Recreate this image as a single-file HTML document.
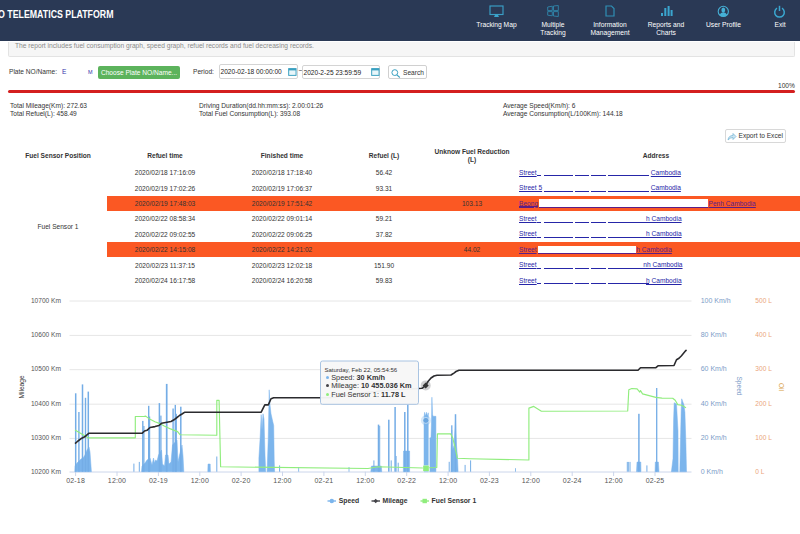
<!DOCTYPE html>
<html><head><meta charset="utf-8">
<style>
*{margin:0;padding:0;box-sizing:border-box}
html,body{width:800px;height:534px;overflow:hidden;background:#fff;font-family:"Liberation Sans",sans-serif;color:#333}
.a{position:absolute;white-space:nowrap}
#hdr{position:absolute;left:0;top:0;width:800px;height:41px;background:#2a3955}
.ttl{color:#fff;font-weight:bold;font-size:10px;top:8.5px;left:-2.5px;transform:scaleX(0.88);transform-origin:0 0}
.nav{color:#fff;font-size:6.7px;text-align:center;line-height:7.5px}
.sm{font-size:6.6px;color:#333;line-height:8px}
.th{font-size:6.6px;font-weight:bold;color:#333;text-align:center;line-height:8px}
.td{font-size:6.6px;color:#333;text-align:center;line-height:8px}
.lk{font-size:6.6px;color:#1a1aa6;text-decoration:underline;line-height:8px}
.ax{font-size:6.6px;color:#555;line-height:8px}
.sp{color:#7c9cc8}
.oil{color:#eba57a}
.lg{font-size:6.8px;font-weight:bold;color:#333;line-height:8px}
.tt{font-size:7.35px;color:#333;line-height:8px}
.band{position:absolute;left:107px;width:693px;height:15px;background:#fb5823}
</style></head><body>
<div id="hdr">
  <div class="a ttl">O TELEMATICS PLATFORM</div>
  <svg class="a" style="left:489px;top:5px" width="15" height="13" viewBox="0 0 15 13"><rect x="1" y="1" width="13" height="8.5" fill="none" stroke="#3a9fc6" stroke-width="1.15"/><path d="M6 10 L9 10 L10 12 L5 12 Z" fill="#3aa6cf"/></svg>
  <div class="a nav" style="left:466px;top:21px;width:61px">Tracking Map</div>
  <svg class="a" style="left:547px;top:5px" width="12" height="12" viewBox="0 0 12 12"><path d="M0.7 2 L5.3 1.2 L5.3 5.6 L0.7 5.6 Z M6.5 1 L11.3 0.5 L11.3 5.6 L6.5 5.6 Z M0.7 6.6 L5.3 6.6 L5.3 10.8 L0.7 10.2 Z M6.5 6.6 L11.3 6.6 L11.3 11.5 L6.5 11 Z" fill="none" stroke="#2f7fa3" stroke-width="1"/></svg>
  <div class="a nav" style="left:523px;top:21px;width:60px">Multiple<br>Tracking</div>
  <svg class="a" style="left:605px;top:5px" width="10" height="12" viewBox="0 0 10 12"><path d="M1 1 L6.5 1 L9 3.5 L9 11 L1 11 Z" fill="none" stroke="#2f8fb5" stroke-width="1.2"/></svg>
  <div class="a nav" style="left:580px;top:21px;width:60px">Information<br>Management</div>
  <svg class="a" style="left:660px;top:5px" width="13" height="12" viewBox="0 0 13 12"><rect x="1" y="8" width="2" height="3" fill="#3aa6cf"/><rect x="4.3" y="3" width="2" height="8" fill="#3aa6cf"/><rect x="7.6" y="1" width="2" height="10" fill="#3aa6cf"/><rect x="10.6" y="5" width="2" height="6" fill="#3aa6cf"/></svg>
  <div class="a nav" style="left:636px;top:21px;width:60px">Reports and<br>Charts</div>
  <svg class="a" style="left:717px;top:4.5px" width="13" height="13" viewBox="0 0 13 13"><circle cx="6.3" cy="6.4" r="5.1" fill="none" stroke="#45b0d6" stroke-width="1.1"/><ellipse cx="6.3" cy="4.9" rx="1.9" ry="2.5" fill="#45b0d6"/><path d="M2.6 9.9 Q3.5 7.3 6.3 7.3 Q9.1 7.3 10 9.9 Q8.5 11.6 6.3 11.6 Q4.1 11.6 2.6 9.9 Z" fill="#45b0d6"/></svg>
  <div class="a nav" style="left:693px;top:21px;width:61px">User Profile</div>
  <svg class="a" style="left:773px;top:5px" width="13" height="13" viewBox="0 0 13 13"><path d="M4 3.2 A4.8 4.8 0 1 0 9 3.2" fill="none" stroke="#3aa6cf" stroke-width="1.5"/><line x1="6.5" y1="0.8" x2="6.5" y2="6" stroke="#3aa6cf" stroke-width="1.5"/></svg>
  <div class="a nav" style="left:765px;top:21px;width:30px">Exit</div>
</div>
<!-- description box -->
<div class="a" style="left:8px;top:41.5px;width:787px;height:15px;background:#f6f6f6;border:1px solid #e3e3e3;border-top:none;border-radius:0 0 2px 2px"></div>
<div class="a sm" style="left:15px;top:41.5px;color:#8a8a8a;font-size:6.66px">The report includes fuel consumption graph, speed graph, refuel records and fuel decreasing records.</div>
<!-- controls -->
<div class="a sm" style="left:9px;top:68px">Plate NO/Name:</div>
<div class="a sm" style="left:62px;top:68px;color:#33a">E</div>
<div class="a sm" style="left:88px;top:68px;color:#33a;font-size:5.5px">M</div>
<div class="a" style="left:98px;top:66px;width:82px;height:13px;background:#5cb35c;border-radius:2px;color:#fff;font-size:6.6px;line-height:13px;text-align:center">Choose Plate NO/Name...</div>
<div class="a sm" style="left:193px;top:68px">Period:</div>
<div class="a" style="left:219px;top:64px;width:79px;height:14.5px;border:1px solid #d4d4d4;border-radius:2px;font-size:6.6px;line-height:14px;padding-left:0.5px;color:#222">2020-02-18 00:00:00</div>
<svg class="a" style="left:287.5px;top:68px" width="9" height="8" viewBox="0 0 10 9"><rect x="0.7" y="0.7" width="8.3" height="7.6" fill="#e8f6fa" stroke="#3aa0c0" stroke-width="1.1"/><rect x="0.7" y="0.7" width="8.3" height="2" fill="#3aa0c0"/></svg>
<div class="a sm" style="left:298.5px;top:67px">~</div>
<div class="a" style="left:302px;top:64.5px;width:78px;height:14px;border:1px solid #d4d4d4;border-radius:2px;font-size:6.6px;line-height:14px;padding-left:0.5px;color:#222">2020-2-25 23:59:59</div>
<svg class="a" style="left:371px;top:68px" width="9" height="8" viewBox="0 0 10 9"><rect x="0.7" y="0.7" width="8.3" height="7.6" fill="#e8f6fa" stroke="#3aa0c0" stroke-width="1.1"/><rect x="0.7" y="0.7" width="8.3" height="2" fill="#3aa0c0"/></svg>
<div class="a" style="left:388px;top:65px;width:38.5px;height:14px;border:1px solid #d0d0d0;border-radius:2px;font-size:6.6px;line-height:14px;padding-left:14px;color:#333">Search</div>
<svg class="a" style="left:390.5px;top:68.5px" width="10" height="9" viewBox="0 0 10 9"><circle cx="3.8" cy="3.6" r="2.9" fill="none" stroke="#3aa0c0" stroke-width="1"/><line x1="5.9" y1="5.8" x2="8.8" y2="8.5" stroke="#3aa0c0" stroke-width="1.1"/></svg>
<div class="a sm" style="left:778px;top:81.5px">100%</div>
<div class="a" style="left:8px;top:90px;width:787px;height:3px;background:#d41f1f;border-radius:1.5px"></div>
<!-- stats -->
<div class="a sm" style="left:10px;top:102px">Total Mileage(Km): 272.63<br>Total Refuel(L): 458.49</div>
<div class="a sm" style="left:199px;top:102px">Driving Duration(dd.hh:mm:ss): 2.00:01:26<br>Total Fuel Consumption(L): 393.08</div>
<div class="a sm" style="left:503px;top:102px">Average Speed(Km/h): 6<br>Average Consumption(L/100Km): 144.18</div>
<!-- export -->
<div class="a" style="left:724.5px;top:128.5px;width:61px;height:14px;border:1px solid #d8d8d8;border-radius:2px;font-size:6.6px;line-height:12px;padding-left:13px;color:#333">Export to Excel</div>
<svg class="a" style="left:727px;top:131.5px" width="10" height="9" viewBox="0 0 10 9"><path d="M1 8 Q1.5 3.5 6 3.5 L6 1.5 L9 4.5 L6 7.5 L6 5.5 Q3 5.5 1 8 Z" fill="#cfe6f2" stroke="#6fb3d6" stroke-width="0.7"/></svg>
<!-- table -->
<div class="a th" style="left:8px;top:151.5px;width:100px">Fuel Sensor Position</div>
<div class="a th" style="left:115px;top:151.5px;width:100px">Refuel time</div>
<div class="a th" style="left:232px;top:151.5px;width:100px">Finished time</div>
<div class="a th" style="left:334px;top:151.5px;width:100px">Refuel (L)</div>
<div class="a th" style="left:422px;top:147.5px;width:100px">Unknow Fuel Reduction<br>(L)</div>
<div class="a th" style="left:606px;top:151.5px;width:100px">Address</div>
<div class="band" style="top:195.9px"></div>
<div class="band" style="top:242.1px"></div>
<div class="a td" style="left:115px;top:169.1px;width:100px">2020/02/18 17:16:09</div>
<div class="a td" style="left:232px;top:169.1px;width:100px">2020/02/18 17:18:40</div>
<div class="a td" style="left:334px;top:169.1px;width:100px">56.42</div>
<div class="a td" style="left:115px;top:184.5px;width:100px">2020/02/19 17:02:26</div>
<div class="a td" style="left:232px;top:184.5px;width:100px">2020/02/19 17:06:37</div>
<div class="a td" style="left:334px;top:184.5px;width:100px">93.31</div>
<div class="a td" style="left:115px;top:199.9px;width:100px">2020/02/19 17:48:03</div>
<div class="a td" style="left:232px;top:199.9px;width:100px">2020/02/19 17:51:42</div>
<div class="a td" style="left:422px;top:199.9px;width:100px">103.13</div>
<div class="a td" style="left:115px;top:215.3px;width:100px">2020/02/22 08:58:34</div>
<div class="a td" style="left:232px;top:215.3px;width:100px">2020/02/22 09:01:14</div>
<div class="a td" style="left:334px;top:215.3px;width:100px">59.21</div>
<div class="a td" style="left:115px;top:230.7px;width:100px">2020/02/22 09:02:55</div>
<div class="a td" style="left:232px;top:230.7px;width:100px">2020/02/22 09:06:25</div>
<div class="a td" style="left:334px;top:230.7px;width:100px">37.82</div>
<div class="a td" style="left:115px;top:246.1px;width:100px">2020/02/22 14:15:08</div>
<div class="a td" style="left:232px;top:246.1px;width:100px">2020/02/22 14:21:02</div>
<div class="a td" style="left:422px;top:246.1px;width:100px">44.02</div>
<div class="a td" style="left:115px;top:261.5px;width:100px">2020/02/23 11:37:15</div>
<div class="a td" style="left:232px;top:261.5px;width:100px">2020/02/23 12:02:18</div>
<div class="a td" style="left:334px;top:261.5px;width:100px">151.90</div>
<div class="a td" style="left:115px;top:276.9px;width:100px">2020/02/24 16:17:58</div>
<div class="a td" style="left:232px;top:276.9px;width:100px">2020/02/24 16:20:58</div>
<div class="a td" style="left:334px;top:276.9px;width:100px">59.83</div>
<div class="a td" style="left:8px;top:222.6px;width:100px">Fuel Sensor 1</div>
<div class="a lk" style="left:519.0px;top:168.8px;color:#2626a8">Street</div>
<div class="a" style="left:537.0px;top:175.4px;width:4.0px;height:0.8px;background:#2626a8"></div>
<div class="a" style="left:543.8px;top:175.4px;width:29.2px;height:0.8px;background:#2626a8"></div>
<div class="a" style="left:574.5px;top:175.4px;width:14.5px;height:0.8px;background:#2626a8"></div>
<div class="a" style="left:590.5px;top:175.4px;width:15.5px;height:0.8px;background:#2626a8"></div>
<div class="a" style="left:608.0px;top:175.4px;width:40.5px;height:0.8px;background:#2626a8"></div>
<div class="a lk" style="left:650.8px;top:168.8px;color:#2626a8">Cambodia</div>
<div class="a lk" style="left:519.0px;top:184.2px;color:#2626a8">Street 5</div>
<div class="a" style="left:537.0px;top:190.8px;width:4.0px;height:0.8px;background:#2626a8"></div>
<div class="a" style="left:543.8px;top:190.8px;width:29.2px;height:0.8px;background:#2626a8"></div>
<div class="a" style="left:574.5px;top:190.8px;width:14.5px;height:0.8px;background:#2626a8"></div>
<div class="a" style="left:590.5px;top:190.8px;width:15.5px;height:0.8px;background:#2626a8"></div>
<div class="a" style="left:608.0px;top:190.8px;width:40.5px;height:0.8px;background:#2626a8"></div>
<div class="a lk" style="left:650.8px;top:184.2px;color:#2626a8">Cambodia</div>
<div class="a lk" style="left:519.0px;top:199.6px;color:#5b1e86">Beong</div>
<div class="a" style="left:519.0px;top:206.2px;width:19.0px;height:0.8px;background:#5b1e86"></div>
<div class="a" style="left:539px;top:199.1px;width:169px;height:8px;background:#fff"></div>
<div class="a" style="left:539.0px;top:206.5px;width:169.0px;height:0.8px;background:#5b1e86"></div>
<div class="a lk" style="left:708.5px;top:199.6px;color:#5b1e86">Penh Cambodia</div>
<div class="a lk" style="left:519.0px;top:215.0px;color:#2626a8">Street</div>
<div class="a" style="left:537.0px;top:221.6px;width:4.0px;height:0.8px;background:#2626a8"></div>
<div class="a" style="left:543.8px;top:221.6px;width:29.2px;height:0.8px;background:#2626a8"></div>
<div class="a" style="left:574.5px;top:221.6px;width:14.5px;height:0.8px;background:#2626a8"></div>
<div class="a" style="left:590.5px;top:221.6px;width:15.5px;height:0.8px;background:#2626a8"></div>
<div class="a" style="left:608.0px;top:221.6px;width:40.5px;height:0.8px;background:#2626a8"></div>
<div class="a lk" style="left:646.0px;top:215.0px;color:#2626a8">h Cambodia</div>
<div class="a lk" style="left:519.0px;top:230.4px;color:#2626a8">Street</div>
<div class="a" style="left:537.0px;top:237.0px;width:4.0px;height:0.8px;background:#2626a8"></div>
<div class="a" style="left:543.8px;top:237.0px;width:29.2px;height:0.8px;background:#2626a8"></div>
<div class="a" style="left:574.5px;top:237.0px;width:14.5px;height:0.8px;background:#2626a8"></div>
<div class="a" style="left:590.5px;top:237.0px;width:15.5px;height:0.8px;background:#2626a8"></div>
<div class="a" style="left:608.0px;top:237.0px;width:40.5px;height:0.8px;background:#2626a8"></div>
<div class="a lk" style="left:646.0px;top:230.4px;color:#2626a8">h Cambodia</div>
<div class="a lk" style="left:519.0px;top:245.8px;color:#5b1e86">Street</div>
<div class="a" style="left:538px;top:245.5px;width:98px;height:7px;background:#fff"></div>
<div class="a" style="left:538.0px;top:252.7px;width:98.0px;height:0.8px;background:#5b1e86"></div>
<div class="a lk" style="left:636.3px;top:245.8px;color:#5b1e86">h Cambodia</div>
<div class="a lk" style="left:519.0px;top:261.2px;color:#2626a8">Street</div>
<div class="a" style="left:537.0px;top:267.8px;width:4.0px;height:0.8px;background:#2626a8"></div>
<div class="a" style="left:543.8px;top:267.8px;width:29.2px;height:0.8px;background:#2626a8"></div>
<div class="a" style="left:574.5px;top:267.8px;width:14.5px;height:0.8px;background:#2626a8"></div>
<div class="a" style="left:590.5px;top:267.8px;width:15.5px;height:0.8px;background:#2626a8"></div>
<div class="a" style="left:608.0px;top:267.8px;width:40.5px;height:0.8px;background:#2626a8"></div>
<div class="a lk" style="left:643.3px;top:261.2px;color:#2626a8">nh Cambodia</div>
<div class="a lk" style="left:519.0px;top:276.6px;color:#2626a8">Street</div>
<div class="a" style="left:537.0px;top:283.2px;width:4.0px;height:0.8px;background:#2626a8"></div>
<div class="a" style="left:543.8px;top:283.2px;width:29.2px;height:0.8px;background:#2626a8"></div>
<div class="a" style="left:574.5px;top:283.2px;width:14.5px;height:0.8px;background:#2626a8"></div>
<div class="a" style="left:590.5px;top:283.2px;width:15.5px;height:0.8px;background:#2626a8"></div>
<div class="a" style="left:608.0px;top:283.2px;width:40.5px;height:0.8px;background:#2626a8"></div>
<div class="a lk" style="left:646.0px;top:276.6px;color:#2626a8">h Cambodia</div>
<svg class="a" style="left:0;top:0" width="800" height="534" viewBox="0 0 800 534">
<line x1="69.5" y1="301.0" x2="691.5" y2="301.0" stroke="#e6e6e6" stroke-width="1"/>
<line x1="69.5" y1="335.4" x2="691.5" y2="335.4" stroke="#e6e6e6" stroke-width="1"/>
<line x1="69.5" y1="369.7" x2="691.5" y2="369.7" stroke="#e6e6e6" stroke-width="1"/>
<line x1="69.5" y1="404.2" x2="691.5" y2="404.2" stroke="#e6e6e6" stroke-width="1"/>
<line x1="69.5" y1="438.4" x2="691.5" y2="438.4" stroke="#e6e6e6" stroke-width="1"/>
<line x1="69.5" y1="472" x2="691.5" y2="472" stroke="#ccd6eb" stroke-width="1"/>
<line x1="75.6" y1="471.7" x2="75.6" y2="476" stroke="#ccd6eb" stroke-width="1"/>
<line x1="117.0" y1="471.7" x2="117.0" y2="476" stroke="#ccd6eb" stroke-width="1"/>
<line x1="158.4" y1="471.7" x2="158.4" y2="476" stroke="#ccd6eb" stroke-width="1"/>
<line x1="199.8" y1="471.7" x2="199.8" y2="476" stroke="#ccd6eb" stroke-width="1"/>
<line x1="241.1" y1="471.7" x2="241.1" y2="476" stroke="#ccd6eb" stroke-width="1"/>
<line x1="282.5" y1="471.7" x2="282.5" y2="476" stroke="#ccd6eb" stroke-width="1"/>
<line x1="323.9" y1="471.7" x2="323.9" y2="476" stroke="#ccd6eb" stroke-width="1"/>
<line x1="365.3" y1="471.7" x2="365.3" y2="476" stroke="#ccd6eb" stroke-width="1"/>
<line x1="406.7" y1="471.7" x2="406.7" y2="476" stroke="#ccd6eb" stroke-width="1"/>
<line x1="448.1" y1="471.7" x2="448.1" y2="476" stroke="#ccd6eb" stroke-width="1"/>
<line x1="489.4" y1="471.7" x2="489.4" y2="476" stroke="#ccd6eb" stroke-width="1"/>
<line x1="530.8" y1="471.7" x2="530.8" y2="476" stroke="#ccd6eb" stroke-width="1"/>
<line x1="572.2" y1="471.7" x2="572.2" y2="476" stroke="#ccd6eb" stroke-width="1"/>
<line x1="613.6" y1="471.7" x2="613.6" y2="476" stroke="#ccd6eb" stroke-width="1"/>
<line x1="655.0" y1="471.7" x2="655.0" y2="476" stroke="#ccd6eb" stroke-width="1"/>
<path d="M74.8 471.7 L75.0 466.0 L77.0 463.0 L79.0 461.0 L81.0 459.0 L83.0 458.0 L85.0 455.0 L87.0 450.0 L89.0 447.0 L90.0 452.0 L91.4 471.7 Z" fill="#7cb5ec" stroke="#7cb5ec" stroke-width="0.5"/>
<path d="M141.5 471.7 L142.0 466.0 L145.0 463.0 L147.0 460.0 L150.0 458.0 L152.0 465.0 L153.5 458.0 L154.5 463.0 L155.5 460.0 L157.0 461.0 L158.5 455.0 L161.5 450.0 L162.5 464.0 L164.5 466.0 L165.5 455.0 L168.0 455.0 L169.0 464.0 L171.0 462.0 L172.5 445.0 L177.0 440.0 L178.0 462.0 L179.5 455.0 L182.0 445.0 L183.0 456.0 L183.8 471.7 Z" fill="#7cb5ec" stroke="#7cb5ec" stroke-width="0.5"/>
<path d="M207.8 471.7 L208.0 464.0 L210.2 464.0 L210.4 471.7 Z" fill="#7cb5ec" stroke="#7cb5ec" stroke-width="0.5"/>
<path d="M258.9 471.7 L258.9 458.0 L260.0 440.0 L261.2 414.7 L262.0 430.0 L263.0 413.8 L264.0 419.0 L265.0 455.0 L265.7 471.7 Z" fill="#7cb5ec" stroke="#7cb5ec" stroke-width="0.5"/>
<path d="M267.1 471.7 L268.2 440.0 L269.2 389.8 L270.0 405.0 L271.0 413.8 L272.8 421.8 L273.7 425.4 L274.2 460.0 L274.6 471.7 Z" fill="#7cb5ec" stroke="#7cb5ec" stroke-width="0.5"/>
<path d="M370.8 471.7 L371.5 466.0 L381.3 466.0 L381.8 471.7 Z" fill="#7cb5ec" stroke="#7cb5ec" stroke-width="0.5"/>
<path d="M403.3 471.7 L403.5 451.0 L409.6 451.0 L409.6 471.7 Z" fill="#7cb5ec" stroke="#7cb5ec" stroke-width="0.5"/>
<path d="M424.0 471.7 L424.0 418.0 L424.6 412.3 L425.6 416.0 L426.5 412.3 L427.4 416.0 L428.3 412.8 L428.3 471.7 Z" fill="#7cb5ec" stroke="#7cb5ec" stroke-width="0.5"/>
<path d="M429.9 471.7 L429.9 437.8 L431.0 437.8 L431.5 420.0 L431.9 397.2 L432.6 415.0 L433.2 416.3 L435.9 416.3 L435.9 471.7 Z" fill="#7cb5ec" stroke="#7cb5ec" stroke-width="0.5"/>
<path d="M450.9 471.7 L451.0 450.0 L451.8 430.0 L452.6 450.0 L454.0 445.0 L455.5 420.0 L456.5 445.0 L457.5 457.4 L458.1 471.7 Z" fill="#7cb5ec" stroke="#7cb5ec" stroke-width="0.5"/>
<path d="M636.5 471.7 L637.0 462.0 L640.8 462.0 L641.0 471.7 Z" fill="#7cb5ec" stroke="#7cb5ec" stroke-width="0.5"/>
<path d="M655.0 471.7 L655.3 462.0 L658.4 462.0 L659.0 471.7 Z" fill="#7cb5ec" stroke="#7cb5ec" stroke-width="0.5"/>
<path d="M671.4 471.7 L673.0 458.5 L673.6 420.0 L674.2 402.7 L676.5 404.0 L677.4 420.0 L678.0 431.0 L678.2 471.7 Z" fill="#7cb5ec" stroke="#7cb5ec" stroke-width="0.5"/>
<path d="M679.8 471.7 L680.5 440.0 L681.2 410.0 L681.7 398.8 L684.0 405.0 L684.9 412.3 L685.8 440.0 L686.5 471.7 Z" fill="#7cb5ec" stroke="#7cb5ec" stroke-width="0.5"/>
<rect x="74.95" y="393.3" width="1.50" height="78.4" fill="#74ade6"/>
<rect x="78.20" y="412.0" width="1.40" height="59.7" fill="#74ade6"/>
<rect x="81.75" y="384.4" width="1.50" height="87.3" fill="#74ade6"/>
<rect x="84.80" y="397.8" width="1.40" height="73.9" fill="#74ade6"/>
<rect x="87.55" y="391.6" width="1.50" height="80.1" fill="#74ade6"/>
<rect x="133.40" y="463.6" width="1.00" height="8.1" fill="#74ade6"/>
<rect x="138.80" y="461.9" width="1.00" height="9.8" fill="#74ade6"/>
<rect x="142.10" y="420.9" width="1.40" height="50.8" fill="#74ade6"/>
<rect x="143.30" y="426.0" width="1.20" height="45.7" fill="#74ade6"/>
<rect x="148.00" y="405.8" width="1.40" height="65.9" fill="#74ade6"/>
<rect x="149.00" y="416.5" width="1.20" height="55.2" fill="#74ade6"/>
<rect x="158.65" y="403.1" width="1.50" height="68.6" fill="#74ade6"/>
<rect x="160.25" y="415.6" width="1.30" height="56.1" fill="#74ade6"/>
<rect x="165.85" y="383.9" width="1.70" height="87.8" fill="#74ade6"/>
<rect x="172.40" y="408.5" width="1.40" height="63.2" fill="#74ade6"/>
<rect x="174.60" y="404.9" width="1.40" height="66.8" fill="#74ade6"/>
<rect x="175.70" y="413.8" width="1.20" height="57.9" fill="#74ade6"/>
<rect x="180.05" y="406.7" width="1.50" height="65.0" fill="#74ade6"/>
<rect x="216.30" y="456.5" width="1.00" height="15.2" fill="#74ade6"/>
<rect x="279.10" y="465.4" width="1.00" height="6.3" fill="#74ade6"/>
<rect x="298.30" y="467.0" width="0.80" height="4.7" fill="#74ade6"/>
<rect x="348.60" y="467.0" width="0.80" height="4.7" fill="#74ade6"/>
<rect x="373.40" y="460.4" width="1.00" height="11.3" fill="#74ade6"/>
<rect x="377.75" y="424.6" width="1.50" height="47.1" fill="#74ade6"/>
<rect x="379.20" y="425.8" width="1.00" height="45.9" fill="#74ade6"/>
<rect x="388.05" y="419.7" width="1.50" height="52.0" fill="#74ade6"/>
<rect x="390.70" y="460.4" width="1.00" height="11.3" fill="#74ade6"/>
<rect x="394.35" y="407.0" width="1.50" height="64.7" fill="#74ade6"/>
<rect x="395.60" y="456.0" width="1.00" height="15.7" fill="#74ade6"/>
<rect x="397.70" y="462.7" width="1.00" height="9.0" fill="#74ade6"/>
<rect x="404.05" y="412.0" width="1.50" height="59.7" fill="#74ade6"/>
<rect x="407.05" y="404.5" width="1.50" height="67.2" fill="#74ade6"/>
<rect x="448.70" y="461.8" width="1.00" height="9.9" fill="#74ade6"/>
<rect x="451.15" y="425.3" width="1.30" height="46.4" fill="#74ade6"/>
<rect x="454.75" y="414.2" width="1.50" height="57.5" fill="#74ade6"/>
<rect x="464.60" y="464.9" width="1.00" height="6.8" fill="#74ade6"/>
<rect x="470.10" y="460.4" width="1.00" height="11.3" fill="#74ade6"/>
<rect x="515.00" y="468.2" width="0.80" height="3.5" fill="#74ade6"/>
<rect x="626.80" y="461.9" width="1.00" height="9.8" fill="#74ade6"/>
<rect x="628.00" y="461.9" width="0.80" height="9.8" fill="#74ade6"/>
<rect x="629.50" y="461.9" width="1.00" height="9.8" fill="#74ade6"/>
<rect x="638.15" y="413.8" width="1.50" height="57.9" fill="#74ade6"/>
<rect x="646.40" y="465.4" width="1.00" height="6.3" fill="#74ade6"/>
<rect x="656.05" y="388.0" width="1.30" height="83.7" fill="#74ade6"/>
<polyline points="75.0,430.0 88.0,437.8 135.3,437.8 135.3,416.5 143.9,416.5 145.7,416.1 149.6,419.1 154.9,421.8 160.0,423.6 164.2,425.9 170.5,428.9 177.6,431.6 180.2,434.8 216.8,435.3 216.8,400.3 219.1,400.3 220.6,466.8 368.0,468.5 378.0,466.8 423.0,468.0 436.8,467.5 437.4,433.9 450.6,433.7 452.7,437.9 454.8,446.3 457.4,458.3 470.0,458.7 528.9,460.0 528.9,408.1 533.8,406.4 541.4,411.2 627.7,411.0 628.8,389.8 631.8,388.5 637.1,388.9 639.8,392.1 640.5,390.5 642.5,393.9 655.8,397.4 662.0,398.1 672.7,398.2 675.2,400.3 677.7,404.6 681.5,405.3 686.0,407.8" fill="none" stroke="#90ed7d" stroke-width="1.15" stroke-linejoin="round"/>
<polyline points="75.0,443.7 78.0,441.0 80.8,438.8 84.7,436.8 88.7,433.3 142.0,433.3 144.5,431.0 147.0,430.3 150.0,427.5 155.0,426.6 159.0,425.5 161.5,423.3 167.0,422.3 171.0,421.5 174.0,419.8 177.0,417.5 179.5,415.5 182.0,414.0 184.5,412.3 261.2,412.2 264.8,404.9 268.3,404.9 271.0,398.7 273.7,397.8 330.0,397.8 360.0,393.0 390.0,390.0 418.2,388.5 422.0,388.3 425.5,385.6 428.0,381.5 431.0,378.0 434.0,376.0 437.0,375.2 451.0,375.0 454.3,372.8 456.0,371.5 459.0,370.3 638.0,370.3 640.5,367.8 655.6,367.8 658.0,365.8 674.0,365.5 676.5,359.7 679.0,358.2 681.5,355.7 685.8,350.6 686.7,350.2" fill="none" stroke="#2b2b2e" stroke-width="1.6" stroke-linejoin="round"/>
<circle cx="425.7" cy="385.4" r="5" fill="#434348" fill-opacity="0.25"/>
<path d="M425.7 382.4 L428.7 385.4 L425.7 388.4 L422.7 385.4 Z" fill="#333"/>
<circle cx="425.9" cy="420.4" r="5" fill="#7cb5ec" fill-opacity="0.3"/>
<circle cx="425.9" cy="420.4" r="3" fill="#6aa6e0" stroke="#fff" stroke-width="0.5"/>
<rect x="423" y="465.4" width="6" height="5.8" fill="#90ed7d" stroke="#fff" stroke-width="0.3"/>
<rect x="320.5" y="361" width="98" height="43.3" rx="2" fill="#f7f7f7" fill-opacity="0.96" stroke="#a9c4e2" stroke-width="1"/>
</svg>
<div class="a ax" style="left:0;width:61px;text-align:right;top:296.8px">10700 Km</div>
<div class="a ax sp" style="left:700.7px;top:296.7px;font-size:7px">100 Km/h</div>
<div class="a ax oil" style="left:755.3px;top:296.8px">500 L</div>
<div class="a ax" style="left:0;width:61px;text-align:right;top:331.1px">10600 Km</div>
<div class="a ax sp" style="left:700.7px;top:331.0px;font-size:7px">80 Km/h</div>
<div class="a ax oil" style="left:755.3px;top:331.1px">400 L</div>
<div class="a ax" style="left:0;width:61px;text-align:right;top:365.3px">10500 Km</div>
<div class="a ax sp" style="left:700.7px;top:365.2px;font-size:7px">60 Km/h</div>
<div class="a ax oil" style="left:755.3px;top:365.3px">300 L</div>
<div class="a ax" style="left:0;width:61px;text-align:right;top:399.7px">10400 Km</div>
<div class="a ax sp" style="left:700.7px;top:399.6px;font-size:7px">40 Km/h</div>
<div class="a ax oil" style="left:755.3px;top:399.7px">200 L</div>
<div class="a ax" style="left:0;width:61px;text-align:right;top:433.9px">10300 Km</div>
<div class="a ax sp" style="left:700.7px;top:433.8px;font-size:7px">20 Km/h</div>
<div class="a ax oil" style="left:755.3px;top:433.9px">100 L</div>
<div class="a ax" style="left:0;width:61px;text-align:right;top:467.9px">10200 Km</div>
<div class="a ax sp" style="left:700.7px;top:467.8px;font-size:7px">0 Km/h</div>
<div class="a ax oil" style="left:755.3px;top:467.9px">0 L</div>
<div class="a ax" style="left:55.6px;width:40px;text-align:center;top:477px;font-size:7px;letter-spacing:0.15px">02-18</div>
<div class="a ax" style="left:97.0px;width:40px;text-align:center;top:477px;font-size:7px;letter-spacing:0.15px">12:00</div>
<div class="a ax" style="left:138.4px;width:40px;text-align:center;top:477px;font-size:7px;letter-spacing:0.15px">02-19</div>
<div class="a ax" style="left:179.8px;width:40px;text-align:center;top:477px;font-size:7px;letter-spacing:0.15px">12:00</div>
<div class="a ax" style="left:221.1px;width:40px;text-align:center;top:477px;font-size:7px;letter-spacing:0.15px">02-20</div>
<div class="a ax" style="left:262.5px;width:40px;text-align:center;top:477px;font-size:7px;letter-spacing:0.15px">12:00</div>
<div class="a ax" style="left:303.9px;width:40px;text-align:center;top:477px;font-size:7px;letter-spacing:0.15px">02-21</div>
<div class="a ax" style="left:345.3px;width:40px;text-align:center;top:477px;font-size:7px;letter-spacing:0.15px">12:00</div>
<div class="a ax" style="left:386.7px;width:40px;text-align:center;top:477px;font-size:7px;letter-spacing:0.15px">02-22</div>
<div class="a ax" style="left:428.1px;width:40px;text-align:center;top:477px;font-size:7px;letter-spacing:0.15px">12:00</div>
<div class="a ax" style="left:469.4px;width:40px;text-align:center;top:477px;font-size:7px;letter-spacing:0.15px">02-23</div>
<div class="a ax" style="left:510.8px;width:40px;text-align:center;top:477px;font-size:7px;letter-spacing:0.15px">12:00</div>
<div class="a ax" style="left:552.2px;width:40px;text-align:center;top:477px;font-size:7px;letter-spacing:0.15px">02-24</div>
<div class="a ax" style="left:593.6px;width:40px;text-align:center;top:477px;font-size:7px;letter-spacing:0.15px">12:00</div>
<div class="a ax" style="left:635.0px;width:40px;text-align:center;top:477px;font-size:7px;letter-spacing:0.15px">02-25</div>
<div class="a ax" style="left:22.2px;top:386.7px;color:#333;transform:translate(-50%,-50%) rotate(-90deg)">Mileage</div>
<div class="a ax sp" style="left:738.9px;top:386px;transform:translate(-50%,-50%) rotate(90deg)">Speed</div>
<div class="a ax oil" style="left:780.8px;top:387px;color:#d9a24a;transform:translate(-50%,-50%) rotate(90deg)">Oil</div>
<svg class="a" style="left:327px;top:497px" width="10" height="8"><line x1="0.5" y1="4" x2="9" y2="4" stroke="#7cb5ec" stroke-width="1.4"/><circle cx="4.8" cy="4" r="2.2" fill="#7cb5ec"/></svg>
<div class="a lg" style="left:338.8px;top:496.6px">Speed</div>
<svg class="a" style="left:370.5px;top:497px" width="10" height="8"><line x1="0.5" y1="4" x2="9" y2="4" stroke="#434348" stroke-width="1.4"/><path d="M4.7 1.8 L6.9 4 L4.7 6.2 L2.5 4 Z" fill="#434348"/></svg>
<div class="a lg" style="left:382.5px;top:496.6px">Mileage</div>
<svg class="a" style="left:419.5px;top:497px" width="10" height="8"><line x1="0.5" y1="4" x2="9" y2="4" stroke="#90ed7d" stroke-width="1.4"/><rect x="2.5" y="1.8" width="4.4" height="4.4" fill="#90ed7d"/></svg>
<div class="a lg" style="left:431.6px;top:496.6px">Fuel Sensor 1</div>
<div class="a tt" style="left:324.4px;top:366px;font-size:6.05px">Saturday, Feb 22, 05:54:56</div>
<div class="a tt" style="left:325px;top:373.8px"><span style="display:inline-block;width:3px;height:3px;border-radius:50%;background:#7cb5ec;margin:0 2.7px 1px 0.5px;vertical-align:middle"></span>Speed: <b>30 Km/h</b></div>
<div class="a tt" style="left:325px;top:382.2px"><span style="display:inline-block;width:3px;height:3px;border-radius:50%;background:#434348;margin:0 2.7px 1px 0.5px;vertical-align:middle"></span>Mileage: <b>10 455.036 Km</b></div>
<div class="a tt" style="left:325px;top:390.5px"><span style="display:inline-block;width:3px;height:3px;border-radius:50%;background:#90ed7d;margin:0 2.7px 1px 0.5px;vertical-align:middle"></span>Fuel Sensor 1: <b>11.78 L</b></div>
</body></html>
